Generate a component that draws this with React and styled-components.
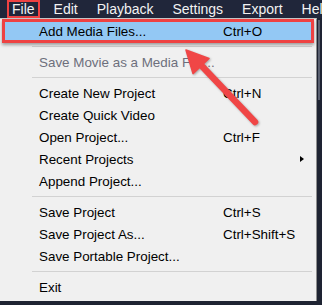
import React from "react";
import styled, { createGlobalStyle } from "styled-components";

const Global = createGlobalStyle`
  html, body { margin: 0; padding: 0; background: #1e2332; }
  body { font-family: "Liberation Sans", Arial, sans-serif; }
`;

const Screen = styled.div`
  position: relative;
  width: 322px;
  height: 305px;
  overflow: hidden;
  background: #1e2332;
`;

const MenuBar = styled.div`
  height: 18px;
  display: flex;
  align-items: center;
  padding-left: 2.5px;
  background: #20263a;
  white-space: nowrap;
`;

const BarItem = styled.span`
  padding: 0 9.5px;
  font-size: 14px;
  line-height: 18px;
  color: #f2f2f2;
`;

const Body = styled.div`
  display: flex;
`;

const Dropdown = styled.div`
  width: 316px;
  background: #f0f0f0;
  border-right: 1px solid #8e8e8e;
  border-top: 1px solid #c8c8c8;
  padding: 1px 0 3px;
  box-sizing: content-box;
`;

const Side = styled.div`
  flex: 1;
  display: flex;
  padding: 2px 0 0 1px;
`;

const SideLine = styled.div`
  width: 2px;
  height: 80px;
  background: #5a6070;
`;

const Item = styled.div`
  display: flex;
  align-items: center;
  height: 22px;
  margin: 0 3px 0 2px;
  padding-left: 37px;
  font-size: 13.4px;
  color: ${(p) => (p.$disabled ? "#6d6f7c" : "#000")};
  background: ${(p) => (p.$active ? "#93c8f4" : "transparent")};
`;

const Label = styled.span`
  width: 184px;
  white-space: nowrap;
`;

const Shortcut = styled.span`
  white-space: nowrap;
`;

const SubArrow = styled.span`
  margin-left: auto;
  margin-right: 9px;
  width: 0;
  height: 0;
  border-top: 3.5px solid transparent;
  border-bottom: 3.5px solid transparent;
  border-left: 4px solid #000;
`;

const Separator = styled.div`
  height: 9px;
  display: flex;
  align-items: center;
  padding: 0 4px 0 32px;
  &::after {
    content: "";
    flex: 1;
    height: 1px;
    background: #d2d2d2;
  }
`;

const FileBox = styled.div`
  position: absolute;
  left: 7px;
  top: 0;
  width: 33px;
  height: 18px;
  box-sizing: border-box;
  border: 2.5px solid #ee4242;
`;

const ActiveBox = styled.div`
  position: absolute;
  left: 2px;
  top: 19px;
  width: 312px;
  height: 24px;
  box-sizing: border-box;
  border: 3px solid #ee4242;
  box-shadow: 0 2px 3px rgba(0, 0, 0, 0.35);
`;

const Overlay = styled.svg`
  position: absolute;
  left: 0;
  top: 0;
  pointer-events: none;
  filter: drop-shadow(1px 1px 1px rgba(0, 0, 0, 0.3));
`;

const items = [
  { label: "Add Media Files...", shortcut: "Ctrl+O", active: true },
  "sep",
  { label: "Save Movie as a Media File...", disabled: true },
  "sep",
  { label: "Create New Project", shortcut: "Ctrl+N" },
  { label: "Create Quick Video" },
  { label: "Open Project...", shortcut: "Ctrl+F" },
  { label: "Recent Projects", sub: true },
  { label: "Append Project..." },
  "sep",
  { label: "Save Project", shortcut: "Ctrl+S" },
  { label: "Save Project As...", shortcut: "Ctrl+Shift+S" },
  { label: "Save Portable Project..." },
  "sep",
  { label: "Exit" },
];

export default function App() {
  return (
    <>
      <Global />
      <Screen>
        <MenuBar>
          {["File", "Edit", "Playback", "Settings", "Export", "Help"].map((m) => (
            <BarItem key={m}>{m}</BarItem>
          ))}
        </MenuBar>
        <Body>
          <Dropdown>
            {items.map((it, i) =>
              it === "sep" ? (
                <Separator key={i} />
              ) : (
                <Item key={i} $active={it.active} $disabled={it.disabled}>
                  <Label>{it.label}</Label>
                  {it.shortcut && <Shortcut>{it.shortcut}</Shortcut>}
                  {it.sub && <SubArrow />}
                </Item>
              )
            )}
          </Dropdown>
          <Side>
            <SideLine />
          </Side>
        </Body>
        <FileBox />
        <ActiveBox />
        <Overlay width="322" height="305" viewBox="0 0 322 305">
          <line x1="255" y1="122" x2="198" y2="62" stroke="#f04646" strokeWidth="6.5" strokeLinecap="round" />
          <polygon points="186,50 209,58.4 193,73.6" fill="#f04646" stroke="#f04646" strokeWidth="1.5" strokeLinejoin="round" />
        </Overlay>
      </Screen>
    </>
  );
}
